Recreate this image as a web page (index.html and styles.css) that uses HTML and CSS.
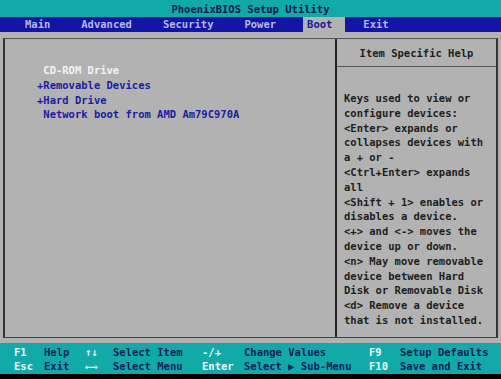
FILE: index.html
```html
<!DOCTYPE html>
<html>
<head>
<meta charset="utf-8">
<link rel="stylesheet" href="styles.css">
</head>
<body>
<div class="screen">
  <div class="title">PhoenixBIOS Setup Utility</div>
  <div class="menu">
    <span class="mi">Main</span>
    <span class="mi">Advanced</span>
    <span class="mi">Security</span>
    <span class="mi">Power</span>
    <span class="mi active">Boot</span>
    <span class="mi">Exit</span>
  </div>
  <div class="main">
    <div class="box">
      <div class="left">
        <div class="item sel">&nbsp;CD-ROM Drive</div>
        <div class="item">+Removable Devices</div>
        <div class="item">+Hard Drive</div>
        <div class="item">&nbsp;Network boot from AMD Am79C970A</div>
      </div>
      <div class="right">
        <div class="help-title">Item Specific Help</div>
        <div class="help-body">
          <div>Keys used to view or</div>
          <div>configure devices:</div>
          <div>&lt;Enter&gt; expands or</div>
          <div>collapses devices with</div>
          <div>a + or -</div>
          <div>&lt;Ctrl+Enter&gt; expands</div>
          <div>all</div>
          <div>&lt;Shift + 1&gt; enables or</div>
          <div>disables a device.</div>
          <div>&lt;+&gt; and &lt;-&gt; moves the</div>
          <div>device up or down.</div>
          <div>&lt;n&gt; May move removable</div>
          <div>device between Hard</div>
          <div>Disk or Removable Disk</div>
          <div>&lt;d&gt; Remove a device</div>
          <div>that is not installed.</div>
        </div>
      </div>
    </div>
  </div>
  <div class="footer">
    <span class="k">F1</span><span class="l">Help</span><span class="k">↑↓</span><span class="l">Select Item</span><span class="k">-/+</span><span class="l">Change Values</span><span class="k">F9</span><span class="l">Setup Defaults</span>
    <span class="k">Esc</span><span class="l">Exit</span><span class="k">←→</span><span class="l">Select Menu</span><span class="k">Enter</span><span class="l">Select ▶ Sub-Menu</span><span class="k">F10</span><span class="l">Save and Exit</span>
  </div>
  <div class="bottom"></div>
</div>
</body>
</html>
```

FILE: styles.css
```css
html, body {
  margin: 0;
  padding: 0;
  background: #000;
}
.screen {
  width: 501px;
  height: 379px;
  font-family: "DejaVu Sans Mono", "Liberation Mono", monospace;
  font-size: 10.5px;
  font-weight: bold;
  display: flex;
  flex-direction: column;
  overflow: hidden;
}
.title {
  height: 17px;
  line-height: 18px;
  background: #12aaa8;
  color: #10184a;
  text-align: center;
}
.menu {
  height: 15px;
  line-height: 15px;
  background: #1414a6;
  display: flex;
  gap: 14px;
  padding-left: 21px;
}
.mi {
  padding: 0 13px 0 4px;
  color: #b4b8e8;
}
.mi.active {
  background: #b2b2b2;
  color: #1a1aa0;
}
.main {
  height: 311px;
  background: #b2b2b2;
  padding: 6px 3px 5px 3px;
  box-sizing: border-box;
}
.box {
  height: 100%;
  box-sizing: border-box;
  border-top: 1px solid #555;
  border-left: 2px solid #333;
  border-right: 2px solid #333;
  border-bottom: 1px solid #444;
  display: flex;
}
.left {
  width: 330px;
  padding-top: 24px;
  box-sizing: border-box;
  padding-left: 32px;
}
.item {
  line-height: 14.8px;
  color: #1c1ca4;
  white-space: nowrap;
}
.item.sel {
  color: #f4f4f4;
}
.right {
  flex: 1;
  border-left: 2px solid #222;
  color: #1e1e1e;
}
.help-title {
  height: 28px;
  line-height: 28px;
  text-align: center;
  border-bottom: 1px solid #555;
  box-sizing: border-box;
}
.help-body {
  padding: 24px 0 0 7px;
  line-height: 14.8px;
  white-space: nowrap;
}
.footer {
  height: 31px;
  background: #12aaa8;
  box-sizing: border-box;
  padding: 3px 0 0 14px;
  display: grid;
  grid-template-columns: 30px 41px 28px 89px 42px 125px 31px auto;
  grid-auto-rows: 13.5px;
  line-height: 13.5px;
  white-space: nowrap;
}
.k {
  color: #eef6f6;
}
.l {
  color: #142058;
}
.bottom {
  flex: 1;
  background: #000;
}
```
